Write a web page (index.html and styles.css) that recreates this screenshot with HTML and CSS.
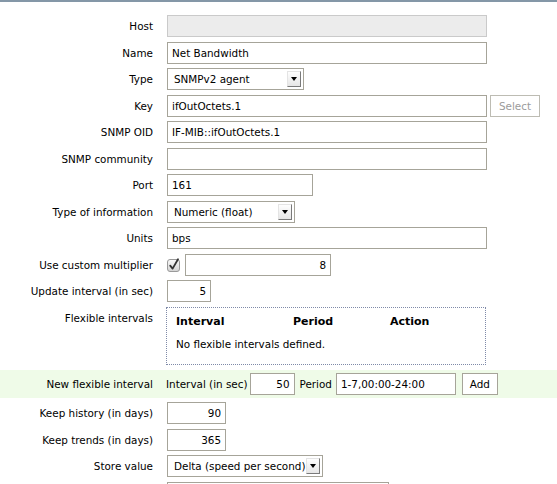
FILE: index.html
```html
<!DOCTYPE html>
<html>
<head>
<meta charset="utf-8">
<link rel="stylesheet" href="styles.css">
</head>
<body>
<div class="topbar"></div>
<div class="form">
  <div class="row"><div class="lbl">Host</div><div class="field"><input class="inp ro w320" value="" readonly></div></div>
  <div class="row"><div class="lbl">Name</div><div class="field"><input class="inp w320" value="Net Bandwidth"></div></div>
  <div class="row"><div class="lbl">Type</div><div class="field"><div class="sel w137"><span>SNMPv2 agent</span><span class="arrow"><svg width="6" height="4" viewBox="0 0 6 4"><path d="M0 0H6L3 4Z" fill="#000"/></svg></span></div></div></div>
  <div class="row"><div class="lbl">Key</div><div class="field"><input class="inp w320" value="ifOutOctets.1"><button class="btn-select">Select</button></div></div>
  <div class="row"><div class="lbl">SNMP OID</div><div class="field"><input class="inp w320" value="IF-MIB::ifOutOctets.1"></div></div>
  <div class="row"><div class="lbl">SNMP community</div><div class="field"><input class="inp w320" value=""></div></div>
  <div class="row"><div class="lbl">Port</div><div class="field"><input class="inp w146" value="161"></div></div>
  <div class="row"><div class="lbl">Type of information</div><div class="field"><div class="sel w128"><span>Numeric (float)</span><span class="arrow"><svg width="6" height="4" viewBox="0 0 6 4"><path d="M0 0H6L3 4Z" fill="#000"/></svg></span></div></div></div>
  <div class="row"><div class="lbl">Units</div><div class="field"><input class="inp w320" value="bps"></div></div>
  <div class="row"><div class="lbl">Use custom multiplier</div><div class="field"><span class="check"><svg width="14" height="15" viewBox="0 0 14 15"><defs><linearGradient id="cg" x1="0" y1="0" x2="0" y2="1"><stop offset="0" stop-color="#fafafa"/><stop offset="1" stop-color="#d2d2d2"/></linearGradient></defs><rect x="0.5" y="2.5" width="12" height="12" rx="2.5" fill="url(#cg)" stroke="#9a9a9a"/><path d="M3.2 8.6 L5.6 11.6 L11 2.2" fill="none" stroke="#333" stroke-width="1.8" stroke-linecap="round" stroke-linejoin="round"/></svg></span><input class="inp num w146" value="8"></div></div>
  <div class="row"><div class="lbl">Update interval (in sec)</div><div class="field"><input class="inp num w44" value="5"></div></div>
  <div class="row top"><div class="lbl lbl-top">Flexible intervals</div><div class="field">
    <div class="flexbox">
      <div class="fhead"><span class="c1">Interval</span><span class="c2">Period</span><span class="c3">Action</span></div>
      <div class="fmsg">No flexible intervals defined.</div>
    </div>
  </div></div>
  <div class="row band"><div class="lbl">New flexible interval</div><div class="field bandfield">
    <span class="txt t1">Interval (in sec)</span><input class="inp num w45" value="50"><span class="txt t2">Period</span><input class="inp w120" value="1-7,00:00-24:00"><button class="btn-add">Add</button>
  </div></div>
  <div class="row"><div class="lbl">Keep history (in days)</div><div class="field"><input class="inp num w59" value="90"></div></div>
  <div class="row"><div class="lbl">Keep trends (in days)</div><div class="field"><input class="inp num w59" value="365"></div></div>
  <div class="row"><div class="lbl">Store value</div><div class="field"><div class="sel w156"><span>Delta (speed per second)</span><span class="arrow"><svg width="6" height="4" viewBox="0 0 6 4"><path d="M0 0H6L3 4Z" fill="#000"/></svg></span></div></div></div>
  <div class="row"><div class="lbl"></div><div class="field"><input class="inp w222" value=""></div></div>
</div>
</body>
</html>
```
FILE: styles.css
```css
html, body {
  margin: 0;
  padding: 0;
  background: #fff;
  font-family: "DejaVu Sans", Verdana, sans-serif;
  font-size: 10.4px;
  color: #000;
  overflow: hidden;
}
.topbar {
  height: 2px;
  background: #8497a7;
}
.form {
  padding-top: 13px;
  display: flex;
  flex-direction: column;
  gap: 4.5px;
}
.row {
  display: flex;
  align-items: center;
  min-height: 22px;
}
.row.top {
  align-items: flex-start;
}
.lbl {
  width: 153px;
  flex: none;
  text-align: right;
  margin-right: 14px;
  line-height: 12px;
}
.lbl-top {
  padding-top: 5px;
}
.field {
  display: flex;
  align-items: center;
}
.inp {
  box-sizing: border-box;
  height: 22px;
  border: 1px solid #a6a499;
  padding: 0 4px;
  margin: 0;
  font-family: "DejaVu Sans", Verdana, sans-serif;
  font-size: 10.4px;
  color: #000;
  background: #fff;
  outline: none;
}
.inp.ro {
  background: #ececec;
  border-color: #cacaca;
}
.inp.num {
  text-align: right;
}
.w320 { width: 320px; }
.w146 { width: 146px; }
.w137 { width: 137px; }
.w128 { width: 128px; }
.w156 { width: 156px; }
.w44 { width: 44px; }
.w45 { width: 45px; }
.w59 { width: 59px; }
.w120 { width: 120px; }
.w222 { width: 222px; }
.sel {
  box-sizing: border-box;
  height: 22px;
  border: 1px solid #a6a499;
  background: #fff;
  display: flex;
  align-items: center;
  justify-content: space-between;
  padding-left: 6px;
  padding-right: 2px;
  white-space: nowrap;
}
.arrow {
  box-sizing: border-box;
  width: 14px;
  height: 16px;
  border: 1px solid;
  border-color: #e4e4e4 #7a7a7a #7a7a7a #e4e4e4;
  background: linear-gradient(#fefefe, #e6e6e6);
  display: flex;
  align-items: center;
  justify-content: center;
}
.arrow svg { display: block; }
.btn-select {
  box-sizing: border-box;
  height: 22px;
  width: 50px;
  margin-left: 3px;
  border: 1px solid #bdbcb3;
  background: #fff;
  color: #9b9b9b;
  font-family: "DejaVu Sans", Verdana, sans-serif;
  font-size: 10.4px;
  padding: 0;
}
.check {
  display: block;
  width: 14px;
  height: 15px;
  margin-right: 4px;
  margin-top: -1px;
}
.check svg { display: block; }
.flexbox {
  box-sizing: border-box;
  width: 320px;
  height: 58px;
  margin-left: -1px;
  border: 1px dotted #7f8aa8;
  padding: 7px 9px 0;
}
.fhead {
  display: flex;
  font-weight: bold;
  font-size: 11px;
  line-height: 14px;
  height: 14px;
}
.c1 { width: 117px; }
.c2 { width: 97px; }
.fmsg {
  margin-top: 8px;
  line-height: 14px;
}
.row.band {
  background: #effbe8;
  height: 28px;
  margin-top: 1px;
  margin-bottom: -0.5px;
}
.bandfield {
  margin-left: -1px;
}
.bandfield .t1 {
  margin-right: 2px;
}
.bandfield .t2 {
  margin-right: 4px;
}
.bandfield .inp {
  margin-right: 5px;
}
.btn-add {
  box-sizing: border-box;
  height: 22px;
  width: 36px;
  margin-left: 1px;
  border: 1px solid #a6a499;
  background: #fff;
  color: #000;
  font-family: "DejaVu Sans", Verdana, sans-serif;
  font-size: 10.4px;
  padding: 0;
}
```
